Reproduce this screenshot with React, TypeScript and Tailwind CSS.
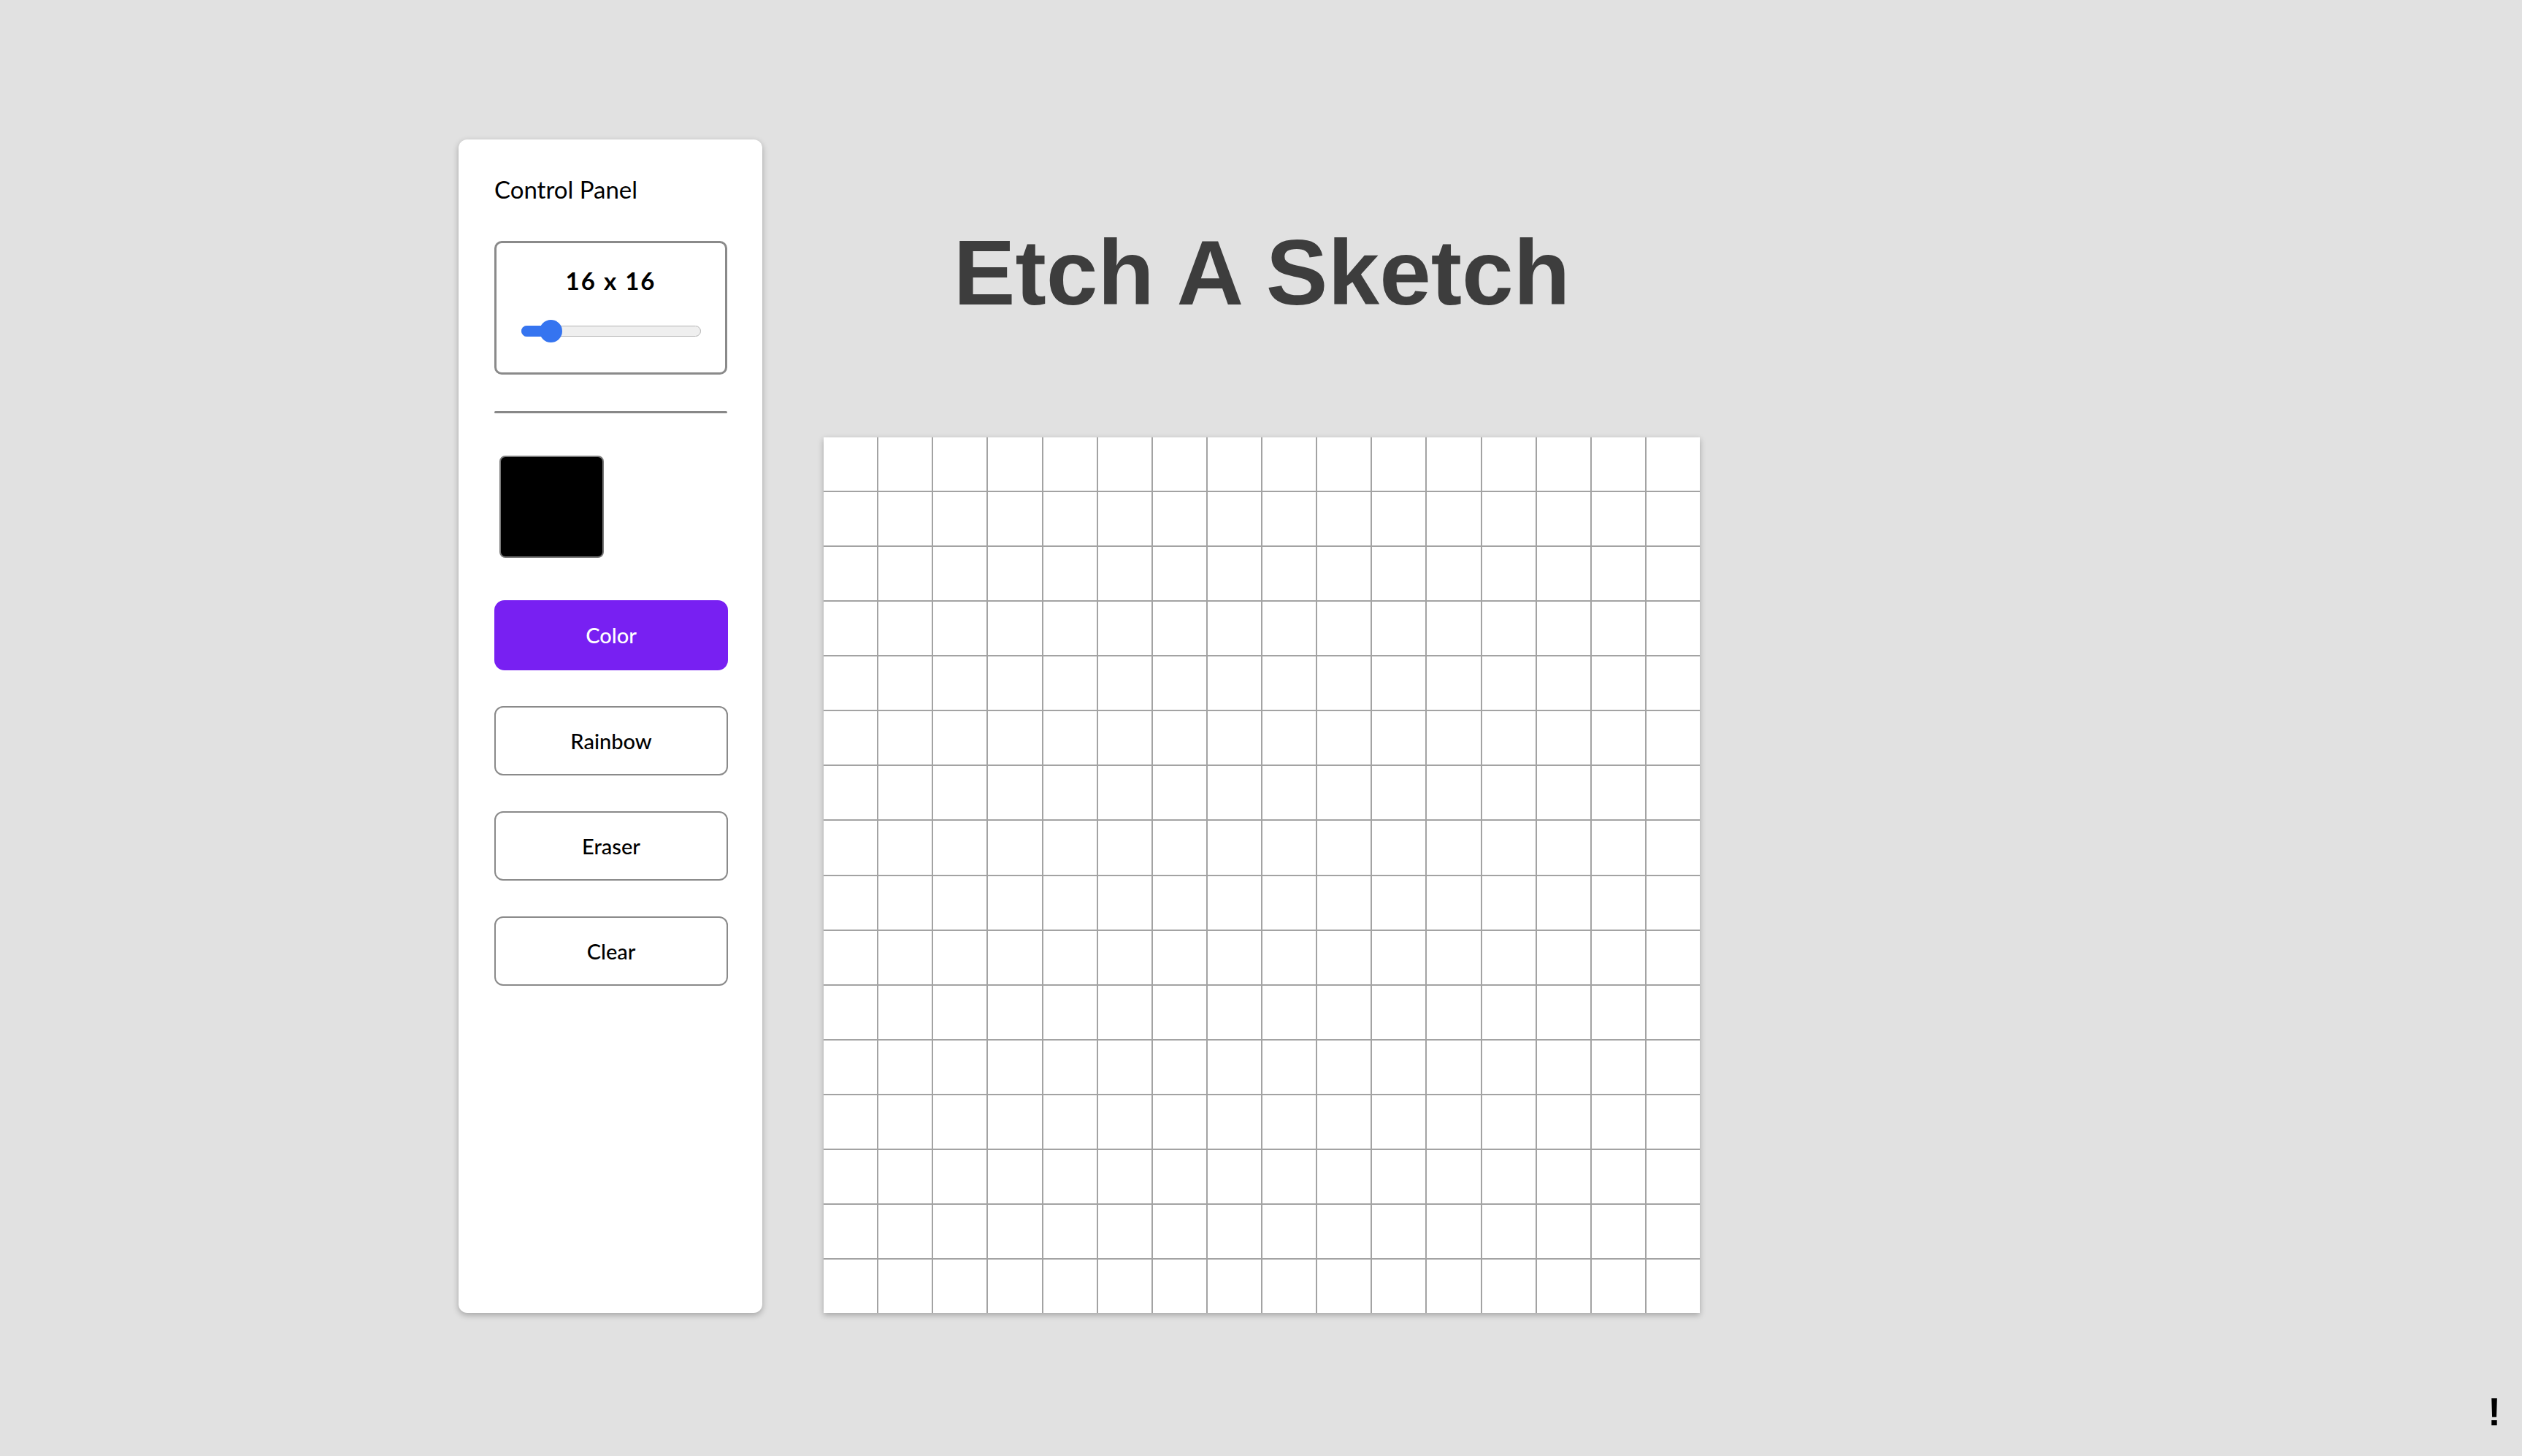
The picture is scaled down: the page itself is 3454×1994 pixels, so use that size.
import React from 'react';

const SIZE = 16;

const buttons = ['Rainbow', 'Eraser', 'Clear'];

const SizeSlider = () => {
  return (
    <div className="mt-[45px] h-[183px] w-[319px] rounded-[10px] border-[3px] border-[#8a8a8a] pt-[32px]">
      <div className="flex h-[40px] items-center justify-center text-[33px] font-bold tracking-[2px] text-black">
        {SIZE} x {SIZE}
      </div>
      <div className="relative mt-[33px] ml-[34px] h-[32px] w-[246px]">
        <div className="absolute left-0 top-[8px] h-[15px] w-[246px] rounded-full border-[1.5px] border-[#b4b4b4] bg-[#efefef]" />
        <div className="absolute left-0 top-[8px] h-[15px] w-[48px] rounded-full bg-[#3574f0]" />
        <div className="absolute left-[25px] top-0 h-[31px] w-[31px] rounded-full bg-[#3574f0]" />
      </div>
    </div>
  );
};

const ControlPanel = () => {
  return (
    <aside className="flex h-[1607px] w-[416px] flex-col rounded-[12px] bg-white pl-[49px] pr-[48px] shadow-[0_3px_8px_rgba(0,0,0,0.28)] font-['Lato',sans-serif]">
      <h2 className="mt-[44px] flex h-[50px] items-center text-[33px] font-normal text-black">Control Panel</h2>
      <SizeSlider />
      <div className="mt-[50px] h-[3px] w-[319px] rounded-full bg-[#888888]" />
      <div className="mt-[58px] ml-[7px] h-[140px] w-[143px] rounded-[8px] border-2 border-[#7a7a7a] bg-black" />
      <button className="mt-[58px] flex h-[96px] w-[320px] items-center justify-center rounded-[14px] bg-[#7820f2] text-[29px] font-medium text-white">
        Color
      </button>
      {buttons.map((label) => (
        <button
          key={label}
          className="mt-[49px] flex h-[95px] w-[320px] items-center justify-center rounded-[12px] border-2 border-[#8a8a8a] bg-white text-[29px] font-medium text-black"
        >
          {label}
        </button>
      ))}
    </aside>
  );
};

const SketchGrid = () => {
  return (
    <div className="grid h-[1199px] w-[1200px] grid-cols-16 grid-rows-16 gap-[2px] bg-[#a3a3a3] shadow-[0_3px_8px_rgba(0,0,0,0.28)]">
      {[...Array(SIZE * SIZE)].map((_, i) => (
        <div key={i} className="bg-white" />
      ))}
    </div>
  );
};

const App = () => {
  return (
    <div className="relative h-screen overflow-hidden bg-[#e1e1e1]">
      <div className="flex items-start gap-[84px] pl-[628px] pt-[191px]">
        <ControlPanel />
        <main className="flex flex-col items-center pt-[119px]">
          <h1 className="h-[127px] text-[127px] font-bold leading-none text-[#3d3d3d] font-['Liberation_Sans',Arial,sans-serif]">
            Etch A Sketch
          </h1>
          <div className="mt-[162px]">
            <SketchGrid />
          </div>
        </main>
      </div>
      <span className="absolute bottom-[34px] right-[29px] text-[53px] font-bold leading-none text-black font-['Liberation_Sans',Arial,sans-serif]">
        !
      </span>
    </div>
  );
};

export default App;
